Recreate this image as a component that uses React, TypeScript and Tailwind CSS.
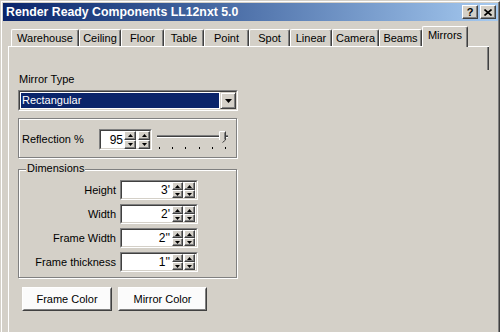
import React from "react";

const tabs = [
  { label: "Warehouse", w: "w-[68px]" },
  { label: "Ceiling", w: "w-[42px]" },
  { label: "Floor", w: "w-[43px]" },
  { label: "Table", w: "w-[40px]" },
  { label: "Point", w: "w-[45px]" },
  { label: "Spot", w: "w-[41px]" },
  { label: "Linear", w: "w-[42px]" },
  { label: "Camera", w: "w-[47px]" },
  { label: "Beams", w: "w-[43px]" },
];

const dimensions = [
  { label: "Height", value: "3'" },
  { label: "Width", value: "2'" },
  { label: "Frame Width", value: "2''" },
  { label: "Frame thickness", value: "1''" },
];

function Arrow({ up }: { up?: boolean }) {
  return (
    <svg width="5" height="3" viewBox="0 0 5 3" className="block">
      {up ? <path d="M2.5 0 L5 3 L0 3 Z" fill="#000" /> : <path d="M0 0 L5 0 L2.5 3 Z" fill="#000" />}
    </svg>
  );
}

function SpinButton({ up, size }: { up?: boolean; size: string }) {
  return (
    <div
      className={`${size} flex items-center justify-center bg-[#d4d0c8] border border-t-white border-l-white border-r-[#404040] border-b-[#404040] shadow-[inset_-1px_-1px_0_#808080]`}
    >
      <Arrow up={up} />
    </div>
  );
}

function SpinPair({ size }: { size: string }) {
  return (
    <div className="flex flex-col">
      <SpinButton up size={size} />
      <SpinButton size={size} />
    </div>
  );
}

function Sunken({ className, children }: { className: string; children: React.ReactNode }) {
  return (
    <div className={`${className} border border-t-[#808080] border-l-[#808080] border-r-white border-b-white`}>
      <div className="h-full w-full flex items-center bg-white border border-t-[#404040] border-l-[#404040] border-r-[#d4d0c8] border-b-[#d4d0c8]">
        {children}
      </div>
    </div>
  );
}

function RaisedButton({ label, w }: { label: string; w: string }) {
  return (
    <div className={`${w} h-[24px] border border-t-white border-l-white border-r-[#404040] border-b-[#404040]`}>
      <div className="h-full flex items-center justify-center bg-[#fbfbfb] border border-t-[#fbfbfb] border-l-[#fbfbfb] border-r-[#808080] border-b-[#808080]">
        {label}
      </div>
    </div>
  );
}

export default function App() {
  return (
    <div className="w-[500px] h-[332px] overflow-hidden bg-[#d4d0c8] pl-[1px] pt-[1px] flex font-['Liberation_Sans',Arial,sans-serif] text-[11px] text-black">
      <div className="flex-1 flex border-t border-l border-t-white border-l-white border-r border-r-[#404040]">
        <div className="flex-1 flex flex-col border-r border-r-[#808080] pl-[1px] pt-[1px]">
          {/* title bar */}
          <div className="h-[18px] flex items-center justify-between bg-linear-to-r from-[#0a246a] to-[#a6caf0] pl-[3px] pr-[2px]">
            <span className="text-white font-bold text-[12.3px] leading-none">Render Ready Components LL12nxt 5.0</span>
            <div className="flex gap-[2px]">
              <div className="w-[16px] h-[14px] flex items-center justify-center bg-[#d4d0c8] border border-t-white border-l-white border-r-[#404040] border-b-[#404040] shadow-[inset_-1px_-1px_0_#808080] font-bold text-[11px] leading-none">
                ?
              </div>
              <div className="w-[16px] h-[14px] flex items-center justify-center bg-[#d4d0c8] border border-t-white border-l-white border-r-[#404040] border-b-[#404040] shadow-[inset_-1px_-1px_0_#808080]">
                <svg width="8" height="7" viewBox="0 0 8 7">
                  <path d="M0.5 0.5 L7.5 6.5 M7.5 0.5 L0.5 6.5" stroke="#000" strokeWidth="1.6" />
                </svg>
              </div>
            </div>
          </div>

          {/* tabs */}
          <div className="mt-[6px] ml-[8px] h-[19px] flex items-end">
            {tabs.map((t) => (
              <div
                key={t.label}
                className={`${t.w} h-[17px] flex items-center justify-center rounded-t-[2px] border-t border-l border-t-white border-l-white border-r border-r-[#404040] shadow-[inset_-1px_0_0_#808080]`}
              >
                {t.label}
              </div>
            ))}
            <div className="relative z-10 w-[46px] h-[21px] -mb-[1px] flex items-center justify-center pb-[3px] rounded-t-[2px] bg-[#d4d0c8] border-t border-l border-t-white border-l-white border-r border-r-[#404040] shadow-[inset_-1px_0_0_#808080]">
              Mirrors
            </div>
          </div>

          {/* panel */}
          <div className="ml-[5px] w-[481px] flex-1 flex border-t border-l border-white">
            <div className="flex-1 flex flex-col pl-[9px] pt-[26px]">
              <div className="h-[13px] leading-[13px] ml-[1px]">Mirror Type</div>

              <Sunken className="mt-[4px] w-[220px] h-[21px]">
                <div className="flex-1 h-full p-[1px]">
                  <div className="h-full bg-[#0a246a] text-white flex items-center pl-[1px]">Rectangular</div>
                </div>
                <div className="w-[16px] h-full flex items-center justify-center bg-[#d4d0c8] border border-t-[#d4d0c8] border-l-[#d4d0c8] border-r-[#404040] border-b-[#404040] shadow-[inset_1px_1px_0_#fff,inset_-1px_-1px_0_#808080]">
                  <svg width="7" height="4" viewBox="0 0 7 4">
                    <path d="M0 0 L7 0 L3.5 4 Z" fill="#000" />
                  </svg>
                </div>
              </Sunken>

              {/* reflection group */}
              <div className="mt-[7px] w-[219px] h-[40px] border border-[#808080] shadow-[inset_1px_1px_0_#fff,1px_1px_0_#fff] pt-[10px] pl-[3px] flex items-start">
                <div className="h-[21px] flex items-center">
                  <span className="w-[77px]">Reflection %</span>
                  <Sunken className="w-[53px] h-[21px]">
                    <span className="flex-1 text-right text-[12px] pr-[1px]">95</span>
                    <div className="flex gap-[2px]">
                      <SpinPair size="w-[12px] h-[9px]" />
                      <SpinPair size="w-[12px] h-[9px]" />
                    </div>
                  </Sunken>
                  <div className="ml-[5px] w-[71px] flex flex-col">
                    <div className="relative h-[12px] flex items-center">
                      <div className="w-full h-[3px] border-t border-t-[#808080] border-b border-b-white bg-[#404040]" />
                      <svg
                        width="7"
                        height="12"
                        viewBox="0 0 7 12"
                        className="absolute left-[62px] top-0"
                      >
                        <path d="M0.5 0.5 H6.5 V9 L3.5 11.5 L0.5 9 Z" fill="#d4d0c8" />
                        <path d="M0.5 9 V0.5 H6.5" stroke="#fff" fill="none" />
                        <path d="M6.5 0.5 V9 L3.5 11.5" stroke="#404040" fill="none" />
                        <path d="M5.5 1.5 V8.5" stroke="#808080" fill="none" />
                      </svg>
                    </div>
                    <div className="mt-[4px] flex justify-between pl-[2px] pr-[2px]">
                      {[0, 1, 2, 3, 4, 5].map((i) => (
                        <div key={i} className="w-px h-[2px] bg-black" />
                      ))}
                    </div>
                  </div>
                </div>
              </div>

              {/* dimensions group */}
              <div className="relative mt-[11px] w-[219px] h-[109px] border border-[#808080] shadow-[inset_1px_1px_0_#fff,1px_1px_0_#fff] pt-[10px] flex flex-col gap-[4px]">
                <span className="absolute -top-[8px] left-[7px] px-[1px] bg-[#d4d0c8] leading-[13px]">Dimensions</span>
                {dimensions.map((d) => (
                  <div key={d.label} className="h-[20px] flex items-center">
                    <span className="w-[97px] text-right">{d.label}</span>
                    <Sunken className="ml-[4px] w-[78px] h-[20px]">
                      <span className="flex-1 text-right text-[12px] pr-[2px]">{d.value}</span>
                      <div className="flex gap-[1px] pr-[1px]">
                        <SpinPair size="w-[11px] h-[8px]" />
                        <SpinPair size="w-[11px] h-[8px]" />
                      </div>
                    </Sunken>
                  </div>
                ))}
              </div>

              <div className="mt-[9px] ml-[4px] flex gap-[6px]">
                <RaisedButton label="Frame Color" w="w-[90px]" />
                <RaisedButton label="Mirror Color" w="w-[89px]" />
              </div>
            </div>
            <div className="w-[2px] h-[23px] border-l border-l-[#808080] bg-[#404040]" />
          </div>
        </div>
      </div>
    </div>
  );
}
